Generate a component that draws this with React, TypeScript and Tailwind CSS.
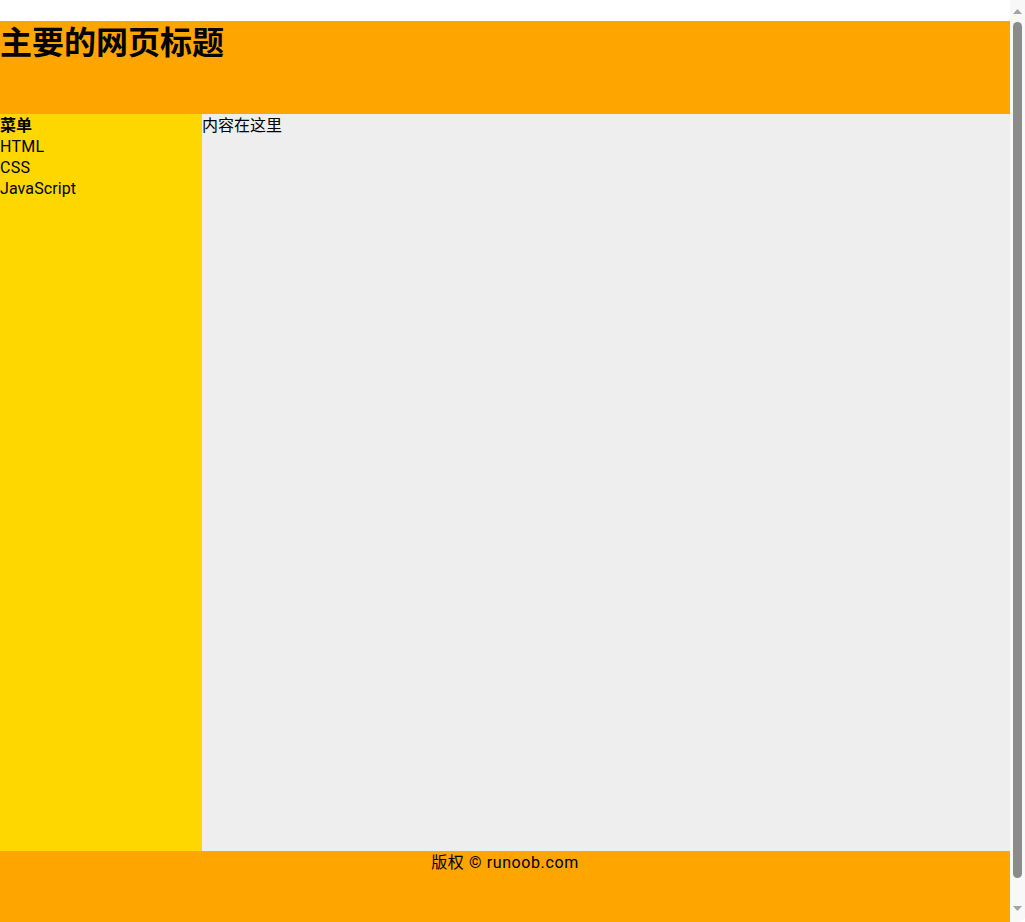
export default function App() {
  const font = { fontFamily: 'Roboto, "Noto Sans CJK SC", sans-serif' };
  return (
    <div className="flex h-[922px] overflow-hidden bg-white text-black" style={font}>
      <div className="w-[1010px] shrink-0">
        <div className="pt-[21px]">
          <div className="h-[93px] bg-[#FFA500]">
            <h1 className="pt-px text-[32px] font-bold leading-[42px]">主要的网页标题</h1>
          </div>
          <div className="flex">
            <div className="h-[737px] w-[202px] bg-[#FFD700] pt-px text-[16px] leading-[21px]">
              <div className="font-bold">菜单</div>
              <div className="tracking-[0.3px]">HTML</div>
              <div className="tracking-[0.3px]">CSS</div>
              <div className="tracking-[0.1px]">JavaScript</div>
            </div>
            <div className="h-[737px] flex-1 bg-[#EEEEEE] pt-px text-[16px] leading-[21px]">内容在这里</div>
          </div>
          <div className="h-[107px] bg-[#FFA500] pt-px text-center text-[16px] leading-[21px] tracking-[0.6px]">版权 © runoob.com</div>
        </div>
      </div>
      <div className="flex w-[15px] flex-col items-center rounded-br-[6px] bg-[#f8f8f8]">
        <svg className="mt-[9px]" width="9" height="5" viewBox="0 0 9 5">
          <polygon points="4.5,0 9,5 0,5" fill="#a3a3a3" />
        </svg>
        <div className="mt-[8px] h-[856px] w-[9px] rounded-full bg-[#8b8b8b]" />
        <svg className="mt-[28px]" width="9" height="5" viewBox="0 0 9 5">
          <polygon points="0,0 9,0 4.5,5" fill="#a3a3a3" />
        </svg>
      </div>
    </div>
  );
}
